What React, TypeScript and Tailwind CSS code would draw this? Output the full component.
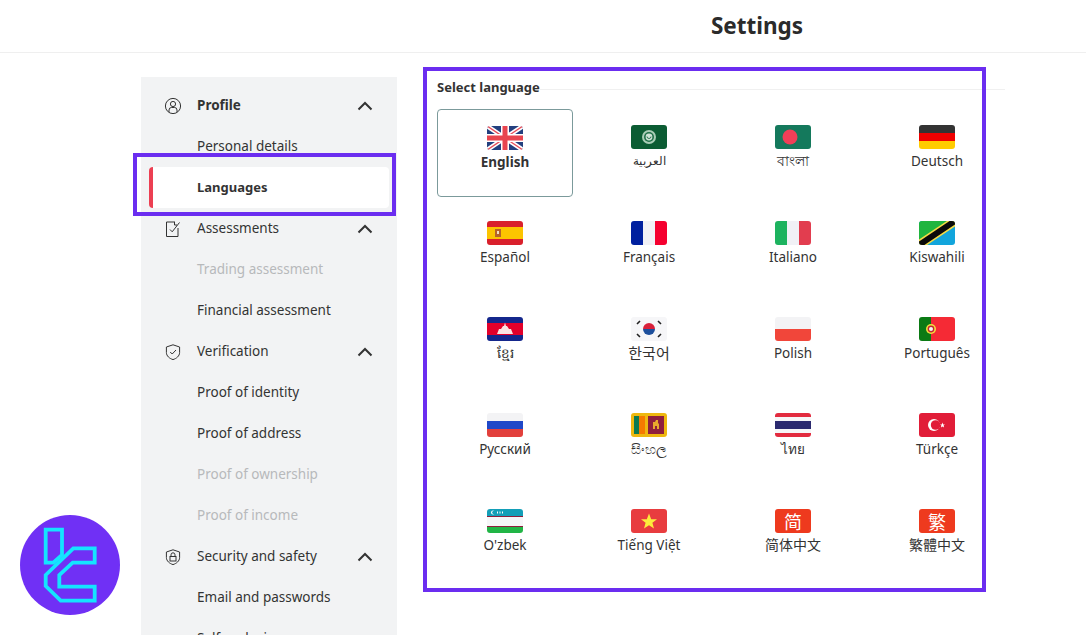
import type { ReactNode } from "react";

const purple = "border-[#6b2df0]";

function Svg({ children }: { children: ReactNode }) {
  return (
    <div className="w-9 h-6 rounded-[3px] overflow-hidden shrink-0">
      <svg viewBox="0 0 36 24" width="36" height="24" className="block">
        {children}
      </svg>
    </div>
  );
}

function R({ y, h, c, x = 0, w = 36 }: { y: number; h: number; c: string; x?: number; w?: number }) {
  return <rect x={x} y={y} width={w} height={h} fill={c} />;
}

const flags: Record<string, ReactNode> = {
  en: (
    <Svg>
      <R y={0} h={24} c="#23407f" />
      <path d="M0 0L36 24M36 0L0 24" stroke="#fff" strokeWidth="4.5" />
      <path d="M0 0L36 24M36 0L0 24" stroke="#e8505b" strokeWidth="1.4" />
      <R y={8} h={8} c="#fff" />
      <R x={14} w={8} y={0} h={24} c="#fff" />
      <R y={9.5} h={5} c="#e8454f" />
      <R x={15.5} w={5} y={0} h={24} c="#e8454f" />
    </Svg>
  ),
  ar: (
    <Svg>
      <R y={0} h={24} c="#0b5c33" />
      <circle cx="18" cy="12" r="7" fill="#a9cdb6" />
      <circle cx="18" cy="12" r="5" fill="#1f7048" />
      <circle cx="18" cy="12" r="3.4" fill="#cfe3d6" />
      <path d="M16 11.5a2 2 0 0 0 4 0" stroke="#1f7048" strokeWidth="0.9" fill="none" />
    </Svg>
  ),
  bn: (
    <Svg>
      <R y={0} h={24} c="#14795c" />
      <circle cx="15" cy="12" r="7.5" fill="#ef3f58" />
    </Svg>
  ),
  de: (
    <Svg>
      <R y={0} h={8} c="#333333" />
      <R y={8} h={8} c="#ef0000" />
      <R y={16} h={8} c="#ffcc00" />
    </Svg>
  ),
  es: (
    <Svg>
      <R y={0} h={24} c="#d9202c" />
      <R y={6} h={12} c="#fcc400" />
      <rect x="8" y="8" width="6" height="8" fill="#b5622a" />
      <rect x="10" y="10" width="2" height="3" fill="#f3dfc0" />
    </Svg>
  ),
  fr: (
    <Svg>
      <R x={0} w={12} y={0} h={24} c="#00209f" />
      <R x={12} w={12} y={0} h={24} c="#f1f1f6" />
      <R x={24} w={12} y={0} h={24} c="#f5002f" />
    </Svg>
  ),
  it: (
    <Svg>
      <R x={0} w={12} y={0} h={24} c="#1db35f" />
      <R x={12} w={12} y={0} h={24} c="#f1f1f6" />
      <R x={24} w={12} y={0} h={24} c="#e23d4f" />
    </Svg>
  ),
  sw: (
    <Svg>
      <R y={0} h={24} c="#12a5dc" />
      <path d="M0 0H36L0 24Z" fill="#20b53f" />
      <path d="M0 24L36 0" stroke="#f5dc45" strokeWidth="9" />
      <path d="M0 24L36 0" stroke="#0a0a0a" strokeWidth="6" />
    </Svg>
  ),
  km: (
    <Svg>
      <R y={0} h={24} c="#14278c" />
      <R y={6} h={12} c="#e2002b" />
      <path d="M10 17L12 12H14L16 9H17L18 5.5L19 9H20L22 12H24L26 17Z" fill="#fbe3e3" />
    </Svg>
  ),
  ko: (
    <Svg>
      <R y={0} h={24} c="#f6f6f8" />
      <path d="M12 12a6 6 0 0 1 12 0Z" fill="#d8203a" />
      <path d="M12 12a6 6 0 0 0 12 0Z" fill="#1d4f9c" />
      <path d="M6 7L9 4M27 4L30 7M6 17L9 20M27 20L30 17" stroke="#222" strokeWidth="1.6" />
    </Svg>
  ),
  pl: (
    <Svg>
      <R y={0} h={12} c="#f3f3f5" />
      <R y={12} h={12} c="#f1463a" />
    </Svg>
  ),
  pt: (
    <Svg>
      <R x={0} w={12} y={0} h={24} c="#0b7a14" />
      <R x={12} w={24} y={0} h={24} c="#f52a35" />
      <circle cx="12" cy="12" r="5" fill="#f2e23c" />
      <circle cx="12" cy="12" r="3.4" fill="#c62630" />
      <circle cx="12" cy="12" r="2" fill="#f4f4f4" />
    </Svg>
  ),
  ru: (
    <Svg>
      <R y={0} h={8} c="#f3f3f5" />
      <R y={8} h={8} c="#1f48c8" />
      <R y={16} h={8} c="#e2403c" />
    </Svg>
  ),
  si: (
    <Svg>
      <R y={0} h={24} c="#eeb80f" />
      <R x={3} w={5} y={3} h={18} c="#0c7a50" />
      <R x={8} w={6} y={3} h={18} c="#f57a00" />
      <R x={17} w={16} y={3} h={18} c="#8f1f3c" />
      <path d="M22 16V9H24L25 7H27V10L28 11V16H26V13H24V16Z" fill="#e9a92c" />
    </Svg>
  ),
  th: (
    <Svg>
      <R y={0} h={24} c="#e22b3f" />
      <R y={4} h={16} c="#f6f6f8" />
      <R y={8} h={8} c="#2b2a6f" />
    </Svg>
  ),
  tr: (
    <Svg>
      <R y={0} h={24} c="#e11d38" />
      <circle cx="15" cy="12" r="6" fill="#fff" />
      <circle cx="16.6" cy="12" r="4.8" fill="#e11d38" />
      <path d="M23.5 9.6L24.2 11.4L26 11.4L24.6 12.6L25.1 14.4L23.5 13.4L21.9 14.4L22.4 12.6L21 11.4L22.8 11.4Z" fill="#fff" />
    </Svg>
  ),
  uz: (
    <Svg>
      <R y={0} h={7} c="#139fb8" />
      <R y={7} h={1} c="#8f1f3c" />
      <R y={8} h={9} c="#f6f6f8" />
      <R y={17} h={1} c="#8f1f3c" />
      <R y={18} h={6} c="#21b546" />
      <circle cx="6" cy="3.5" r="2" fill="#fff" />
      <circle cx="7" cy="3.5" r="1.8" fill="#139fb8" />
      <path d="M10 3.5h1M12.5 3.5h1M15 3.5h1" stroke="#fff" strokeWidth="2" />
    </Svg>
  ),
  vi: (
    <Svg>
      <R y={0} h={24} c="#e83c3f" />
      <path d="M18 4.5L20.2 10.2H26L21.4 13.8L23 19.5L18 16.2L13 19.5L14.6 13.8L10 10.2H15.8Z" fill="#fcec3c" />
    </Svg>
  ),
};

function CharFlag({ ch }: { ch: string }) {
  return (
    <div className="w-9 h-6 rounded-[3px] bg-[#ee3a1e] flex items-center justify-center text-white text-[18px] leading-none font-['Noto_Sans_CJK_SC',sans-serif] shrink-0">
      {ch}
    </div>
  );
}

const langs: { label: string; flag: ReactNode; active?: boolean; size?: string }[] = [
  { label: "English", flag: flags.en, active: true },
  { label: "العربية", flag: flags.ar, size: "text-[12px]" },
  { label: "বাংলা", flag: flags.bn },
  { label: "Deutsch", flag: flags.de },
  { label: "Español", flag: flags.es },
  { label: "Français", flag: flags.fr },
  { label: "Italiano", flag: flags.it },
  { label: "Kiswahili", flag: flags.sw },
  { label: "ខ្មែរ", flag: flags.km },
  { label: "한국어", flag: flags.ko, size: "text-[15px]" },
  { label: "Polish", flag: flags.pl },
  { label: "Português", flag: flags.pt },
  { label: "Русский", flag: flags.ru },
  { label: "සිංහල", flag: flags.si },
  { label: "ไทย", flag: flags.th },
  { label: "Türkçe", flag: flags.tr },
  { label: "O'zbek", flag: flags.uz },
  { label: "Tiếng Việt", flag: flags.vi },
  { label: "简体中文", flag: <CharFlag ch="简" />, size: "text-[14px]" },
  { label: "繁體中文", flag: <CharFlag ch="繁" />, size: "text-[14px]" },
];

function Chevron() {
  return (
    <svg width="16" height="10" viewBox="0 0 16 10" fill="none" className="ml-auto mr-[24px]">
      <path d="M1.5 8.5L8 2L14.5 8.5" stroke="#333" strokeWidth="2" />
    </svg>
  );
}

const iconProps = {
  width: 18,
  height: 18,
  viewBox: "0 0 18 18",
  fill: "none",
  stroke: "#333",
  strokeWidth: 1,
};

function ProfileIcon() {
  return (
    <svg {...iconProps}>
      <circle cx="9" cy="9" r="7.6" />
      <circle cx="9" cy="7" r="2.6" />
      <path d="M5 15V13a2.5 2.5 0 0 1 2.5-2.5h3A2.5 2.5 0 0 1 13 13v2" />
    </svg>
  );
}

function AssessIcon() {
  return (
    <svg {...iconProps}>
      <path d="M11 2H2.5V16.5H14V8" />
      <path d="M10.5 2V5H13" />
      <path d="M6 9.5L8.2 11.8L15.5 2.5" />
    </svg>
  );
}

function ShieldIcon() {
  return (
    <svg {...iconProps}>
      <path d="M9 1.8L15.6 4V9.5C15.6 13 12.5 15.5 9 16.6 5.5 15.5 2.4 13 2.4 9.5V4Z" />
      <path d="M6.2 9L8.2 11L12 7" />
    </svg>
  );
}

function LockIcon() {
  return (
    <svg {...iconProps}>
      <path d="M9 1.8L15.6 4V9.5C15.6 13 12.5 15.5 9 16.6 5.5 15.5 2.4 13 2.4 9.5V4Z" />
      <rect x="6" y="8.5" width="6" height="4.5" />
      <path d="M7 8.5V6.8a2 2 0 0 1 4 0V8.5" />
    </svg>
  );
}

type NavItem = { label: string; icon?: ReactNode; bold?: boolean; muted?: boolean; active?: boolean };

const nav: NavItem[] = [
  { label: "Profile", icon: <ProfileIcon />, bold: true },
  { label: "Personal details" },
  { label: "Languages", active: true, bold: true },
  { label: "Assessments", icon: <AssessIcon /> },
  { label: "Trading assessment", muted: true },
  { label: "Financial assessment" },
  { label: "Verification", icon: <ShieldIcon /> },
  { label: "Proof of identity" },
  { label: "Proof of address" },
  { label: "Proof of ownership", muted: true },
  { label: "Proof of income", muted: true },
  { label: "Security and safety", icon: <LockIcon /> },
  { label: "Email and passwords" },
  { label: "Self-exclusion" },
];

function Row({ item }: { item: NavItem }) {
  const color = item.muted ? "text-[#b7b9bb]" : "text-[#333333]";
  if (item.active) {
    return (
      <div className="h-[41px] mx-2 flex items-center bg-white rounded-[4px] border-l-4 border-[#ec3f52] pl-[44px]">
        <span className={`${color} font-bold text-[13px] mb-[2px]`}>{item.label}</span>
      </div>
    );
  }
  return (
    <div className="h-[41px] flex items-center">
      <div className="w-[56px] pl-[23px] shrink-0">{item.icon}</div>
      <span className={`${color} ${item.bold ? "font-bold" : "font-normal"} mb-[2px]`}>{item.label}</span>
      {item.icon && <Chevron />}
    </div>
  );
}

export default function App() {
  return (
    <div className="relative h-[635px] overflow-hidden bg-white text-[13.5px] leading-5 font-['Noto_Sans','Noto_Sans_CJK_KR',sans-serif] text-[#333333]">
      <header className="h-[53px] border-b border-[#efefef] flex items-center justify-center pl-[428px]">
        <h1 className="text-[22.5px] font-bold text-[#2b2b2b]">Settings</h1>
      </header>

      <div className="flex pl-[141px] pt-6">
        <aside className="w-[256px] h-[600px] bg-[#f2f3f4] pt-2 shrink-0">
          {nav.map((item) => (
            <Row key={item.label} item={item} />
          ))}
        </aside>

        <main className="ml-10 w-[568px]">
          <div className="flex items-center h-5 mb-[12px]">
            <span className="font-bold text-[13px] text-[#333333]">Select language</span>
            <div className="flex-1 border-t border-[#f0f0f0] mt-1" />
          </div>
          <div className="grid grid-cols-[repeat(4,136px)] auto-rows-[88px] gap-2">
            {langs.map((l) => (
              <div
                key={l.label}
                className={`flex flex-col items-center pt-4 rounded-[4px] ${
                  l.active ? "border border-[#7b9a9b] font-bold" : ""
                }`}
              >
                {l.flag}
                <span className={`mt-[2px] ${l.size ?? ""}`}>{l.label}</span>
              </div>
            ))}
          </div>
        </main>
      </div>

      <div className={`absolute left-[133px] top-[153px] w-[263px] h-[63px] border-4 ${purple}`} />
      <div className={`absolute left-[423px] top-[67px] w-[563px] h-[525px] border-4 ${purple}`} />

      <div className="absolute left-[20px] top-[515px] w-[100px] h-[100px] rounded-full bg-[#7030f5]">
        <svg viewBox="0 0 100 100" width="100" height="100" fill="none" stroke="#14e4ff" strokeWidth="3.8">
          <path d="M25.7 14.7H42V40L33.3 47.7H25.7Z" />
          <path d="M25.7 60L53.3 33.3H74.7V47.7H52.7L39.3 60V71.7H74.7V85.7H40.700L25.7 71Z" />
        </svg>
      </div>
    </div>
  );
}
